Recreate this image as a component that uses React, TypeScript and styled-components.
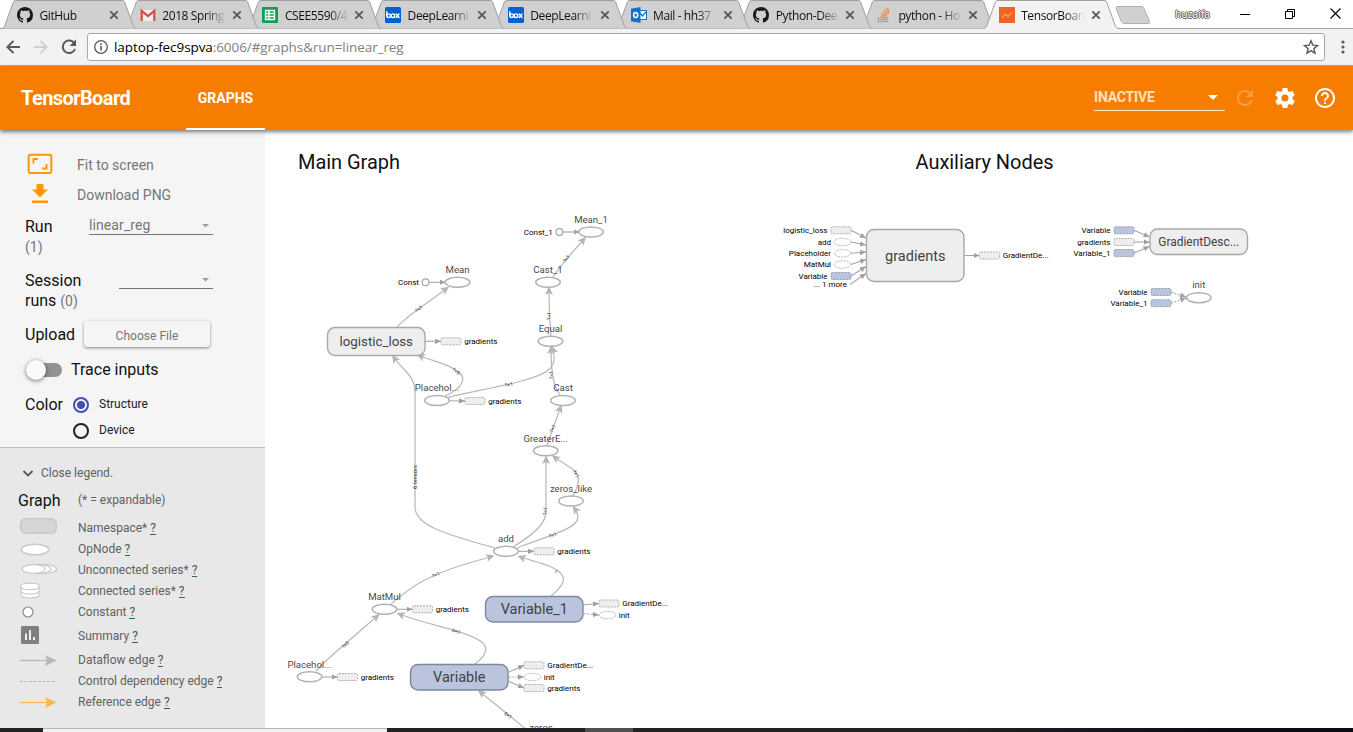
import React from "react";
import styled, { createGlobalStyle, css } from "styled-components";

const GlobalStyle = createGlobalStyle`
  * { box-sizing: border-box; }
  body { margin: 0; background: #fff; overflow: hidden; }
`;

const chromeFont = `"Open Sans", "Noto Sans", sans-serif`;

const Window = styled.div`
  width: 1353px;
  height: 732px;
  display: flex;
  flex-direction: column;
  overflow: hidden;
  font-family: Roboto, "Liberation Sans", sans-serif;
  color: #212121;
`;

/* ---------- browser chrome ---------- */

const TabStrip = styled.div`
  height: 29px;
  flex: none;
  display: flex;
  padding-left: 2px;
  border-bottom: 1px solid #a3a3a3;
  font-family: ${chromeFont};
`;

const TabBox = styled.div<{ $active?: boolean; $order: number }>`
  display: grid;
  width: 134px;
  height: 29px;
  flex: none;
  margin-right: -11.3px;
  position: relative;
  z-index: ${(p) => (p.$active ? 20 : p.$order)};
  > * { grid-area: 1 / 1; }
`;

const TabShape = styled.svg`
  display: block;
  overflow: visible;
`;

const TabContent = styled.div`
  display: flex;
  align-items: center;
  padding: 1px 16px 0 15px;
`;

const TabTitle = styled.span`
  margin-left: 6.5px;
  width: 63px;
  font-size: 12px;
  letter-spacing: -0.4px;
  color: #111;
  white-space: nowrap;
  overflow: hidden;
  mask-image: linear-gradient(90deg, #000 44px, transparent 64px);
`;

const TabClose = styled.svg`
  display: block;
  margin-left: 6.5px;
`;

const NewTab = styled.svg`
  display: block;
  margin-left: 9px;
  margin-top: 6px;
`;

const WindowControls = styled.div`
  margin-left: auto;
  display: flex;
  align-items: center;
  height: 27px;
  padding-right: 12px;
`;

const UserName = styled.span`
  font-size: 10px;
  color: #fff;
  letter-spacing: 0.1px;
  margin-right: 30px;
  text-shadow: 1px 0 #555, -1px 0 #666, 0 1px #555, 0 -1px #666;
`;

const ControlIcon = styled.svg<{ $gap?: number }>`
  display: block;
  margin-right: ${(p) => p.$gap ?? 0}px;
`;

const AddressRow = styled.div`
  height: 37px;
  flex: none;
  display: flex;
  align-items: center;
  background: #f2f2f2;
  border-bottom: 1px solid #b3b0ab;
  padding: 0 6px 0 5px;
`;

const NavIcon = styled.svg<{ $gap?: number }>`
  display: block;
  flex: none;
  margin-right: ${(p) => p.$gap ?? 10}px;
`;

const AddressBar = styled.div`
  height: 28px;
  width: 1238px;
  display: flex;
  align-items: center;
  border: 1px solid #a8a8a8;
  border-radius: 3px;
  background: #fff;
  padding: 0 5px;
  font-family: ${chromeFont};
  font-size: 13.5px;
  color: #000;
`;

const Url = styled.span`
  margin-left: 5px;
  margin-right: auto;
  letter-spacing: -0.08px;
  white-space: nowrap;
  span { color: #808080; }
`;

const MenuDots = styled.svg`
  display: block;
  margin-left: 16px;
`;

/* ---------- application header ---------- */

const AppHeader = styled.header`
  height: 64px;
  flex: none;
  display: flex;
  align-items: center;
  background: #f77d00;
  padding: 0 16px 0 21px;
  position: relative;
  z-index: 2;
  box-shadow: 0 2px 4px rgba(0, 0, 0, 0.5);
  color: #fff;
`;

const Brand = styled.h1`
  margin: 0;
  width: 165px;
  font-size: 20px;
  font-weight: 700;
  letter-spacing: -0.58px;
`;

const HeaderTab = styled.div`
  width: 79px;
  height: 64px;
  border-bottom: 2px solid #fff;
  display: flex;
  align-items: center;
  justify-content: center;
  padding-top: 2px;
  font-size: 14px;
  font-weight: 700;
  letter-spacing: 0;
`;

const RunSelect = styled.div`
  margin-left: auto;
  width: 131px;
  height: 26px;
  border-bottom: 1px solid #ffe9d2;
  display: flex;
  align-items: center;
  justify-content: space-between;
  padding: 0 7px 1px 0;
  font-size: 14px;
  font-weight: 700;
  letter-spacing: -0.18px;
  color: #ffe0c0;
`;

const HeaderIcon = styled.svg<{ $faded?: boolean }>`
  display: block;
  margin-left: ${(p) => (p.$faded ? 8 : 16)}px;
  fill: #fff;
  opacity: ${(p) => (p.$faded ? 0.25 : 1)};
`;

/* ---------- body ---------- */

const Body = styled.main`
  height: 598px;
  flex: none;
  display: flex;
`;

const Sidebar = styled.aside`
  width: 265px;
  display: flex;
  flex-direction: column;
  background: #f5f5f5;
`;

const Controls = styled.section`
  height: 317px;
  padding: 20px 0 0 25px;
`;

const ActionRow = styled.div`
  height: 30px;
  display: flex;
  align-items: center;
  font-size: 14px;
  color: #757575;
  svg { display: block; margin: -2px 22px 0 0; }
`;

const FieldRow = styled.div<{ $h: number; $top?: number }>`
  height: ${(p) => p.$h}px;
  margin-top: ${(p) => p.$top ?? 0}px;
  display: flex;
  font-size: 16px;
  line-height: 19.5px;
  color: #111;
`;

const FieldLabel = styled.div<{ $w: number; $drop?: number }>`
  width: ${(p) => p.$w}px;
  padding-top: ${(p) => p.$drop ?? 0}px;
  flex: none;
  small { font-size: 14px; line-height: 18px; color: #757575; }
`;

const Dropdown = styled.div<{ $w: number }>`
  width: ${(p) => p.$w}px;
  height: 18px;
  border-bottom: 1px solid #757575;
  display: flex;
  align-items: center;
  justify-content: space-between;
  padding: 1px 4px 0 0;
  font-size: 14px;
  letter-spacing: 0.1px;
  color: #757575;
`;

const FileButton = styled.button`
  width: 126px;
  height: 26px;
  margin: -1px 0 0 1px;
  border: 0;
  border-radius: 3px;
  background: #f5f5f5;
  box-shadow: 0 1px 3px rgba(0, 0, 0, 0.45);
  font: 12px Roboto, sans-serif;
  letter-spacing: 0.03px;
  color: #757575;
  padding: 3px 0 0;
`;

const Toggle = styled.div`
  width: 36px;
  height: 20px;
  display: flex;
  align-items: center;
  margin: 0 9px 0 1px;
  &::before {
    content: "";
    width: 20px;
    height: 20px;
    border-radius: 50%;
    background: #fafafa;
    box-shadow: 0 1px 4px rgba(0, 0, 0, 0.55);
    z-index: 1;
  }
  &::after {
    content: "";
    width: 26px;
    height: 14px;
    border-radius: 7px;
    background: #929292;
    margin-left: -10px;
  }
`;

const Radio = styled.span<{ $on?: boolean }>`
  width: 16px;
  height: 16px;
  border-radius: 50%;
  border: 2px solid #212121;
  margin-right: 10px;
  ${(p) =>
    p.$on &&
    css`
      border-color: #3f51b5;
      background: radial-gradient(circle, #3f51b5 3.6px, transparent 4.4px);
    `}
`;

const RadioGroup = styled.div`
  display: flex;
  flex-direction: column;
`;

const RadioRow = styled.label`
  height: 26px;
  display: flex;
  align-items: center;
  font-size: 12px;
  color: #212121;
`;

const Legend = styled.section`
  flex: 1;
  background: #e8e8e8;
  border-top: 1px solid #bdbdbd;
  padding-top: 15px;
  font-size: 12px;
  color: #616161;
`;

const LegendToggle = styled.div`
  height: 20px;
  display: flex;
  align-items: center;
  padding-left: 22px;
  svg { display: block; margin-right: 7px; }
`;

const LegendHeading = styled.div`
  height: 34px;
  display: grid;
  grid-template-columns: 60px auto;
  align-items: center;
  padding-left: 18px;
  b { font-weight: 400; font-size: 16px; color: #111; }
`;

const LegendRow = styled.div<{ $h?: number }>`
  height: ${(p) => p.$h ?? 21}px;
  display: grid;
  grid-template-columns: 60px auto;
  align-items: center;
  padding-left: 18px;
  svg { display: block; overflow: visible; }
  a { color: #4c5a4f; border-bottom: 1px solid #2e6b3c; line-height: 12px; display: inline-block; }
`;

const GraphPane = styled.section`
  flex: 1;
  display: grid;
  background: #fff;
  > * { grid-area: 1 / 1; }
`;

const GraphTitles = styled.div`
  display: flex;
  padding: 20px 0 0 33px;
  font-size: 20px;
  line-height: 24px;
  letter-spacing: -0.04px;
  color: #111;
  span:first-child { width: 617.5px; }
`;

const GraphSvg = styled.svg`
  display: block;
  overflow: hidden;
  font-family: Roboto, sans-serif;
`;

const Taskbar = styled.footer`
  height: 4px;
  flex: none;
  display: flex;
  background: linear-gradient(90deg, #222326 0 70%, #0a0d14 90%);
`;

const TaskSegment = styled.div<{ $w: number; $tone?: "light" | "mid" }>`
  width: ${(p) => p.$w}px;
  background: ${(p) => (p.$tone === "light" ? "#f2f1f1" : p.$tone === "mid" ? "#505052" : "transparent")};
  border-top: ${(p) => (p.$tone === "light" ? "1px solid #b5b5b5" : "0")};
`;

/* ---------- favicons ---------- */

const GithubIcon = () => (
  <svg width="16" height="16" viewBox="0 0 16 16">
    <path
      fill="#1b1817"
      d="M8 0C3.58 0 0 3.58 0 8c0 3.54 2.29 6.53 5.47 7.59.4.07.55-.17.55-.38 0-.19-.01-.82-.01-1.49-2.01.37-2.53-.49-2.69-.94-.09-.23-.48-.94-.82-1.13-.28-.15-.68-.52-.01-.53.63-.01 1.08.58 1.23.82.72 1.21 1.87.87 2.33.66.07-.52.28-.87.51-1.07-1.78-.2-3.64-.89-3.64-3.95 0-.87.31-1.59.82-2.15-.08-.2-.36-1.02.08-2.12 0 0 .67-.21 2.2.82.64-.18 1.32-.27 2-.27s1.36.09 2 .27c1.53-1.04 2.2-.82 2.2-.82.44 1.1.16 1.92.08 2.12.51.56.82 1.27.82 2.15 0 3.07-1.87 3.75-3.65 3.95.29.25.54.73.54 1.48 0 1.07-.01 1.93-.01 2.2 0 .21.15.46.55.38A8.01 8.01 0 0 0 16 8c0-4.42-3.58-8-8-8z"
    />
  </svg>
);

const GmailIcon = () => (
  <svg width="16" height="16" viewBox="0 0 16 16">
    <rect x="1" y="3" width="14" height="11" fill="#f3eeee" />
    <path d="M1.700 14V3.800L8 9l6.300-5.200V14" fill="none" stroke="#d54b3d" strokeWidth="2.200" />
  </svg>
);

const SheetsIcon = () => (
  <svg width="16" height="16" viewBox="0 0 16 16">
    <rect width="16" height="16" rx="1" fill="#109d58" />
    <path d="M3.500 3.500h9v9h-9zM3.500 6.500h9M3.500 9.500h9M7 3.500v9" fill="none" stroke="#fff" strokeWidth="1.300" />
  </svg>
);

const BoxIcon = () => (
  <svg width="16" height="16" viewBox="0 0 16 16">
    <rect width="16" height="16" rx="1.500" fill="#0061d5" />
    <g fill="none" stroke="#fff" strokeWidth="1.400" strokeLinecap="round">
      <path d="M1.800 4.800v4" />
      <circle cx="3.700" cy="8.700" r="1.800" />
      <circle cx="8" cy="8.700" r="1.800" />
      <path d="M11.200 7l2.800 3.500M14 7l-2.800 3.500" />
    </g>
  </svg>
);

const OutlookIcon = () => (
  <svg width="16" height="16" viewBox="0 0 16 16">
    <rect x="8" y="3.500" width="7.500" height="9" fill="#fff" stroke="#0f72c6" />
    <path d="M9 6l2.500 3L15.500 4.500" fill="none" stroke="#0f72c6" strokeWidth="1.200" />
    <path d="M0 1.800L9.500 0v16L0 14.200z" fill="#0f72c6" />
    <ellipse cx="4.700" cy="8" rx="2" ry="2.600" fill="none" stroke="#fff" strokeWidth="1.500" />
  </svg>
);

const StackIcon = () => (
  <svg width="16" height="16" viewBox="0 0 16 16">
    <path d="M2.500 10v4.500h9V10" fill="none" stroke="#a5a5a8" strokeWidth="1.300" />
    <path d="M4.200 12.300h5.800M4.300 9.900l5.800.7M4.900 7.200l5.500 1.900M6.300 4.500l4.800 3.300M8.600 2l3.600 4.500M11.300.5l1.500 5" stroke="#f08030" strokeWidth="1.200" fill="none" />
  </svg>
);

const TensorIcon = () => (
  <svg width="16" height="16" viewBox="0 0 16 16">
    <rect width="16" height="16" fill="#f1622a" />
    <path d="M2.800 11l3.400-3.800 3 2.300L13 5" fill="none" stroke="#fba81c" strokeWidth="1.500" />
  </svg>
);

const tabs = [
  { title: "GitHub", icon: <GithubIcon /> },
  { title: "2018 Spring", icon: <GmailIcon /> },
  { title: "CSEE5590/4", icon: <SheetsIcon /> },
  { title: "DeepLearni", icon: <BoxIcon /> },
  { title: "DeepLearni", icon: <BoxIcon /> },
  { title: "Mail - hh37", icon: <OutlookIcon /> },
  { title: "Python-Dee", icon: <GithubIcon /> },
  { title: "python - Ho", icon: <StackIcon /> },
  { title: "TensorBoard", icon: <TensorIcon />, active: true },
];

const Tab = ({ title, icon, active, order }: { title: string; icon: React.ReactNode; active?: boolean; order: number }) => (
  <TabBox $active={active} $order={order}>
    <TabShape width="134" height="29">
      <path
        d="M0 28.500C2 28 2.500 26.500 3 25L11 3C11.700 1.200 12.300.5 14 .5H120C121.700.5 122.300 1.200 123 3L131 25C131.500 26.500 132 28 134 28.500"
        fill={active ? "#f2f2f2" : "#d0d0d0"}
        stroke="#a0a0a0"
      />
      {active && <path d="M1 28.500H133" stroke="#f2f2f2" strokeWidth="1.200" />}
    </TabShape>
    <TabContent>
      {icon}
      <TabTitle>{title}</TabTitle>
      <TabClose width="10" height="10" viewBox="0 0 10 10">
        <path d="M1.300 1.300l7.400 7.400M8.700 1.300L1.300 8.700" stroke="#555" strokeWidth="1.700" />
      </TabClose>
    </TabContent>
  </TabBox>
);

/* ---------- graph drawing ---------- */

const OpNode = ({ x, y, label }: { x: number; y: number; label: string }) => (
  <g>
    <ellipse cx={x} cy={y} rx="12.300" ry="5" fill="#fff" stroke="#b0b0b0" strokeWidth="1.400" />
    <text x={x} y={y - 9.3} textAnchor="middle" fontSize="9.600" fill="#4a4a4a">{label}</text>
  </g>
);

const Namespace = ({ x, y, w = 97.5, h, label, blue, size = 14.5 }: { x: number; y: number; w?: number; h: number; label: string; blue?: boolean; size?: number }) => (
  <g>
    <rect x={x} y={y} width={w} height={h} rx="7.500" fill={blue ? "#bac5dd" : "#eeeeee"} stroke={blue ? "#7e88a0" : "#a9a9a9"} strokeWidth="1.400" />
    <text x={x + w / 2} y={y + h / 2 + size * 0.36} textAnchor="middle" fontSize={size} fill="#424242">{label}</text>
  </g>
);

type NoteKind = "ns" | "blue" | "op";

const NoteShape = ({ x, y, kind }: { x: number; y: number; kind: NoteKind }) =>
  kind === "op" ? (
    <ellipse cx={x} cy={y} rx="8.300" ry="3.700" fill="#fff" stroke="#adadad" strokeWidth=".9" strokeDasharray="2 1" />
  ) : (
    <rect x={x - 10} y={y - 3.5} width="20" height="7" rx="1.500" fill={kind === "blue" ? "#bac5dd" : "#eeeeee"} stroke={kind === "blue" ? "#8d97af" : "#a9a9a9"} strokeWidth=".9" strokeDasharray="2 1" />
  );

const NoteText = ({ x, y, end, children }: { x: number; y: number; end?: boolean; children: string }) => (
  <text x={x} y={y + 2.8} textAnchor={end ? "end" : "start"} fontSize="8" fill="#000">{children}</text>
);

const NoteArrow = ({ d, dotted }: { d: string; dotted?: boolean }) => (
  <path d={d} fill="none" stroke="#a6a6a6" strokeWidth="1.100" strokeDasharray={dotted ? "2 1.500" : undefined} markerEnd="url(#noteHead)" />
);

/* Outgoing annotation: arrow from the node edge, then shape and label. */
const OutNote = ({ from, x, y, kind = "ns", label }: { from: [number, number]; x: number; y: number; kind?: NoteKind; label: string }) => (
  <g>
    <NoteArrow d={`M${from[0]} ${from[1]}L${x} ${y}`} dotted={kind === "op"} />
    <NoteShape x={kind === "op" ? x + 8.5 : x + 10} y={y} kind={kind} />
    <NoteText x={kind === "op" ? x + 19.7 : x + 23.2} y={y}>{label}</NoteText>
  </g>
);

/* Incoming annotation: label, shape, then arrow towards the node edge. */
const InNote = ({ to, x, y, kind, label, dotted }: { to: [number, number]; x: number; y: number; kind: NoteKind; label: string; dotted?: boolean }) => (
  <g>
    <NoteArrow d={`M${x} ${y}L${to[0]} ${to[1]}`} dotted={dotted} />
    <NoteShape x={kind === "op" ? x - 8.5 : x - 10} y={y} kind={kind} />
    <NoteText x={kind === "op" ? x - 20 : x - 23.5} y={y} end>{label}</NoteText>
  </g>
);

const ConstNote = ({ x, y, label }: { x: number; y: number; label: string }) => (
  <g>
    <NoteArrow d={`M${x + 3} ${y}H${x + 20}`} />
    <circle cx={x} cy={y} r="3.400" fill="#fff" stroke="#a6a6a6" strokeWidth="1.200" />
    <NoteText x={x - 6.7} y={y} end>{label}</NoteText>
  </g>
);

const edges = [
  "M553 277C560 267 562 265 566.500 259L585 238",
  "M551 336C550 325 549 315 549 288",
  "M397 327C405 319 405 320 409 316L448 287.500",
  "M445 396C463 388 467 378 458 371.500C449 364 432 361 418 355",
  "M446 398C480 389 535 382 549 369.500C556 363 555 355 552 347",
  "M560 395C553 385 551 372 551 347",
  "M547 446C551 433 556 420 561 406",
  "M495 548C440 533 415 524 415 507V392C415 375 402 370 393 356",
  "M513 547C541 530 546 520 546 511V457",
  "M517 548C545 537 569 531 576 522C580 517 577 512 573.500 507",
  "M573 496C578 487 581 477 575 471.500C570 466 562 463 553 456",
  "M390 605C405 592 418 583 427 579C450 567 470 563 493 556",
  "M551 596C564 585 566 579 561 573.500C553 565 535 562 519 556.500",
  "M316 671C330 656 333 655 345 644L378.500 615",
  "M475 664C487 655 489 647 481 641.500C465 630 430 626 398 613.500",
  "M532 734L479 691",
];

const edgeLabels: [number, number, number, string][] = [
  [566.5, 259, -52, "?×1"],
  [549.5, 316, -90, "?×1"],
  [419, 309, -38, "?×1"],
  [456, 371.5, 30, "?×6"],
  [509, 385, -12, "?×1"],
  [551.5, 375, -95, "?×1"],
  [553, 428.5, -68, "?×1"],
  [415, 477, -90, "6 tensors"],
  [545.5, 511, -85, "?×1"],
  [553, 535.5, -20, "?×1"],
  [575.5, 474, 60, "?×1"],
  [436, 575, -22, "?×1"],
  [555.5, 572, 35, "1"],
  [345.5, 645, -42, "?×6"],
  [456, 631.5, 20, "6×1"],
  [508, 715.5, 40, "6×1"],
];

const Graph = () => (
  <GraphSvg width="1088" height="598" viewBox="265 130 1088 598">
    <defs>
      <marker id="edgeHead" markerUnits="userSpaceOnUse" markerWidth="9" markerHeight="9" refX="7" refY="4" orient="auto">
        <path d="M0 0L8.500 4L0 8L2 4Z" fill="#b5b5b5" />
      </marker>
      <marker id="noteHead" markerUnits="userSpaceOnUse" markerWidth="7" markerHeight="7" refX="6" refY="2.700" orient="auto">
        <path d="M0 0L6 2.700L0 5.400Z" fill="#a0a0a0" />
      </marker>
    </defs>
    {edges.map((d) => (
      <path key={d} d={d} fill="none" stroke="#b9b9b9" strokeWidth="1.250" markerEnd="url(#edgeHead)" />
    ))}

    <OutNote from={[425, 341.3]} x={441} y={341.3} label="gradients" />
    <OutNote from={[449, 400.7]} x={465} y={401} label="gradients" />
    <OutNote from={[518, 551.3]} x={534} y={551.3} label="gradients" />
    <OutNote from={[397, 609.3]} x={412.5} y={609.3} label="gradients" />
    <OutNote from={[322, 677]} x={337.5} y={677} label="gradients" />
    <OutNote from={[584, 604.8]} x={599} y={603.5} label="GradientDe..." />
    <OutNote from={[584, 613.5]} x={599} y={615} kind="op" label="init" />
    <OutNote from={[509, 672]} x={524} y={665.3} label="GradientDe..." />
    <OutNote from={[509, 677]} x={524} y={677} kind="op" label="init" />
    <OutNote from={[509, 681.5]} x={524} y={688} label="gradients" />
    <ConstNote x={559.5} y={232} label="Const_1" />
    <ConstNote x={425.6} y={282.3} label="Const" />

    <OpNode x={591} y={232} label="Mean_1" />
    <OpNode x={548} y={282.3} label="Cast_1" />
    <OpNode x={457.5} y={282.3} label="Mean" />
    <OpNode x={550.5} y={341.3} label="Equal" />
    <OpNode x={437} y={400.5} label="Placehol..." />
    <OpNode x={563} y={400.5} label="Cast" />
    <OpNode x={545.7} y={450.8} label="GreaterE..." />
    <OpNode x={571} y={501} label="zeros_like" />
    <OpNode x={506} y={551.3} label="add" />
    <OpNode x={384.5} y={609.3} label="MatMul" />
    <OpNode x={309.6} y={676.8} label="Placehol..." />
    <OpNode x={541} y={740} label="zeros" />
    <Namespace x={327.5} y={327.5} h={28} label="logistic_loss" size={13.3} />
    <Namespace x={485.5} y={596.5} h={25.5} label="Variable_1" blue />
    <Namespace x={410.5} y={664.5} h={25.5} label="Variable" blue />

    {edgeLabels.map(([x, y, r, t]) => (
      <text key={`${x}-${y}`} transform={`translate(${x} ${y}) rotate(${r})`} y="1.500" textAnchor="middle" fontSize={t.length > 3 ? 5.8 : 5.2} fill="#333">
        {t}
      </text>
    ))}

    <InNote to={[866, 238]} x={851} y={230.3} kind="ns" label="logistic_loss" />
    <InNote to={[866, 245]} x={851} y={242} kind="op" label="add" />
    <InNote to={[866, 252]} x={851} y={253.3} kind="op" label="Placeholder" />
    <InNote to={[866, 259.5]} x={851} y={264.5} kind="op" label="MatMul" />
    <InNote to={[866, 266.5]} x={851} y={276} kind="blue" label="Variable" />
    <NoteArrow d="M850 284.500L866 273.500" />
    <NoteText x={847} y={284.3} end>... 1 more</NoteText>
    <OutNote from={[964, 255.5]} x={979.5} y={255.5} label="GradientDe..." />
    <Namespace x={866.5} y={229.5} h={52} label="gradients" />

    <InNote to={[1149.5, 237]} x={1134} y={230.3} kind="blue" label="Variable" />
    <InNote to={[1149.5, 242]} x={1134} y={242} kind="ns" label="gradients" />
    <InNote to={[1149.5, 246.5]} x={1134} y={253} kind="blue" label="Variable_1" />
    <Namespace x={1150} y={229} h={25.5} label="GradientDesc..." size={11.95} />

    <InNote to={[1186, 297]} x={1171} y={292} kind="blue" label="Variable" dotted />
    <InNote to={[1186, 298]} x={1171} y={303.2} kind="blue" label="Variable_1" dotted />
    <OpNode x={1198.8} y={297.7} label="init" />
  </GraphSvg>
);

/* ---------- legend ---------- */

const legend: { label: string; h?: number; icon: React.ReactNode }[] = [
  {
    label: "Namespace*",
    icon: <rect x="2.700" y="1.700" width="35.500" height="14.500" rx="5" fill="#d6d6d6" stroke="#c8c8c8" strokeWidth="1.500" />,
  },
  { label: "OpNode", icon: <ellipse cx="17" cy="11.500" rx="13.700" ry="5.300" fill="#fff" stroke="#c8c8c8" strokeWidth="1.400" /> },
  {
    label: "Unconnected series*",
    icon: (
      <g fill="#fff" stroke="#c8c8c8" strokeWidth="1.200">
        <ellipse cx="27" cy="10" rx="11.500" ry="4.300" />
        <ellipse cx="21.500" cy="10" rx="11.500" ry="4.300" />
        <ellipse cx="15.500" cy="10" rx="11.500" ry="4.300" />
      </g>
    ),
  },
  {
    label: "Connected series*",
    icon: (
      <g fill="#fff" stroke="#c8c8c8" strokeWidth="1.100">
        <path d="M3 5.500V15C3 17 7 18 12 18S21 17 21 15V5.500C21 4 17 3.300 12 3.300S3 4 3 5.500Z" />
        <path d="M3 6.500C3 8.800 7 9.800 12 9.800S21 8.800 21 6.500M3 10.700C3 13 7 14 12 14S21 13 21 10.700" />
      </g>
    ),
  },
  { label: "Constant", icon: <circle cx="10" cy="11" r="5" fill="#fff" stroke="#8a8a8a" strokeWidth="1.200" /> },
  {
    label: "Summary",
    h: 27,
    icon: (
      <g>
        <rect x="3" y="1" width="18" height="18" rx="1.500" fill="#808080" />
        <path d="M8 8.500v6.500M12 5v10M16 12v3" stroke="#fff" strokeWidth="1.700" />
      </g>
    ),
  },
  {
    label: "Dataflow edge",
    icon: (
      <g>
        <path d="M2 11.500H30" stroke="#b8b8b8" strokeWidth="1.300" />
        <path d="M27 6L38.500 11.500L27 17L29 11.500Z" fill="#b8b8b8" />
      </g>
    ),
  },
  { label: "Control dependency edge", icon: <path d="M2 11.500H38" stroke="#b8b8b8" strokeWidth="1.200" strokeDasharray="3 1.500" /> },
  {
    label: "Reference edge",
    icon: (
      <g>
        <path d="M2 11.500H30" stroke="#ffb74d" strokeWidth="1.300" />
        <path d="M27 6L38.500 11.500L27 17L29 11.500Z" fill="#ffb74d" />
      </g>
    ),
  },
];

const Caret = ({ color, w = 10 }: { color: string; w?: number }) => (
  <svg width={w} height={w / 2} viewBox="0 0 10 5">
    <path d="M0 0h10L5 5z" fill={color} />
  </svg>
);

export default function App() {
  return (
    <Window>
      <GlobalStyle />
      <TabStrip>
        {tabs.map((t, i) => (
          <Tab key={i} {...t} order={10 - i} />
        ))}
        <NewTab width="36" height="19">
          <path d="M3 .5H26C28 .5 28.500 1 29.300 3L34.500 15.500C35 17 34.500 17.500 33 17.500H10C8 17.500 7 17 6.300 15.500L1.300 3C.7 1.300 1 .5 3 .5Z" fill="#d0d0d0" stroke="#b0b0b0" />
        </NewTab>
        <WindowControls>
          <UserName>huzaifa</UserName>
          <ControlIcon $gap={35} width="10" height="10"><path d="M0 5.500H10" stroke="#000" /></ControlIcon>
          <ControlIcon $gap={35} width="10" height="10" viewBox="0 0 10 10">
            <path d="M.5 2.500h7v7h-7zM2.500 2.500V.5h7v7h-2" fill="none" stroke="#000" />
          </ControlIcon>
          <ControlIcon width="11" height="11" viewBox="0 0 11 11">
            <path d="M.5.5l10 10M10.500.5l-10 10" stroke="#000" strokeWidth="1.100" />
          </ControlIcon>
        </WindowControls>
      </TabStrip>
      <AddressRow>
        <NavIcon width="17" height="16" viewBox="0 0 17 16">
          <path d="M15 8H2.500M8.500 2L2.300 8l6.200 6" fill="none" stroke="#5a5a5a" strokeWidth="1.900" />
        </NavIcon>
        <NavIcon $gap={11} width="17" height="16" viewBox="0 0 17 16">
          <path d="M2 8h12.500M8.500 2l6.200 6-6.200 6" fill="none" stroke="#d0d0d0" strokeWidth="1.900" />
        </NavIcon>
        <NavIcon $gap={9} width="18" height="18" viewBox="0 0 18 18">
          <path d="M14.500 5.500A6.300 6.300 0 1 0 15 11" fill="none" stroke="#5a5a5a" strokeWidth="2" />
          <path d="M16 1.500V8H9.500z" fill="#5a5a5a" />
        </NavIcon>
        <AddressBar>
          <svg width="16" height="16" viewBox="0 0 16 16">
            <circle cx="8" cy="8" r="6.300" fill="none" stroke="#5a5a5a" strokeWidth="1.300" />
            <path d="M8 7v4.500M8 4.300v1.700" stroke="#5a5a5a" strokeWidth="1.600" />
          </svg>
          <Url>laptop-fec9spva<span>:6006/#graphs&amp;run=linear_reg</span></Url>
          <svg width="16" height="16" viewBox="0 0 16 16">
            <path d="M8 1.700l1.800 4.400 4.700.4-3.600 3.100 1.100 4.600L8 11.700l-4 2.500 1.100-4.600L1.500 6.500l4.700-.4z" fill="none" stroke="#5a5a5a" strokeWidth="1.400" />
          </svg>
        </AddressBar>
        <MenuDots width="4" height="14">
          <circle cx="2" cy="2" r="1.600" fill="#5a5a5a" />
          <circle cx="2" cy="7" r="1.600" fill="#5a5a5a" />
          <circle cx="2" cy="12" r="1.600" fill="#5a5a5a" />
        </MenuDots>
      </AddressRow>
      <AppHeader>
        <Brand>TensorBoard</Brand>
        <HeaderTab>GRAPHS</HeaderTab>
        <RunSelect>
          INACTIVE
          <Caret color="#fff" />
        </RunSelect>
        <HeaderIcon $faded width="24" height="24" viewBox="0 0 24 24">
          <path d="M17.650 6.350A7.960 7.960 0 0 0 12 4a8 8 0 1 0 7.730 10h-2.080A6 6 0 1 1 12 6c1.660 0 3.140.69 4.220 1.780L13 11h7V4z" />
        </HeaderIcon>
        <HeaderIcon width="24" height="24" viewBox="0 0 24 24">
          <path d="M19.430 12.980c.04-.32.07-.64.07-.98s-.03-.66-.07-.98l2.110-1.650c.19-.15.24-.42.12-.64l-2-3.460c-.12-.22-.39-.3-.61-.22l-2.490 1c-.52-.4-1.080-.73-1.690-.98l-.38-2.650A.488.488 0 0 0 14 2h-4c-.25 0-.46.18-.49.42l-.38 2.650c-.61.25-1.170.59-1.690.98l-2.490-1c-.23-.09-.49 0-.61.22l-2 3.460c-.13.22-.07.49.12.64l2.110 1.650c-.04.32-.07.65-.07.98s.03.66.07.98l-2.110 1.650c-.19.15-.24.42-.12.64l2 3.460c.12.22.39.3.61.22l2.490-1c.52.4 1.080.73 1.690.98l.38 2.650c.03.24.24.42.49.42h4c.25 0 .46-.18.49-.42l.38-2.650c.61-.25 1.170-.59 1.690-.98l2.490 1c.23.09.49 0 .61-.22l2-3.460c.12-.22.07-.49-.12-.64l-2.110-1.650zM12 15.500a3.500 3.500 0 1 1 0-7 3.500 3.500 0 0 1 0 7z" />
        </HeaderIcon>
        <HeaderIcon width="24" height="24" viewBox="0 0 24 24">
          <path d="M11 18h2v-2h-2v2zm1-16C6.480 2 2 6.480 2 12s4.480 10 10 10 10-4.480 10-10S17.520 2 12 2zm0 18c-4.410 0-8-3.590-8-8s3.590-8 8-8 8 3.590 8 8-3.590 8-8 8zm0-14c-2.210 0-4 1.790-4 4h2c0-1.100.9-2 2-2s2 .9 2 2c0 2-3 1.750-3 5h2c0-2.250 3-2.500 3-5 0-2.210-1.790-4-4-4z" />
        </HeaderIcon>
      </AppHeader>
      <Body>
        <Sidebar>
          <Controls>
            <ActionRow>
              <svg width="30" height="30" viewBox="0 0 30 30">
                <path d="M5 5.800h20a1.300 1.300 0 0 1 1.300 1.300v15.500a1.300 1.300 0 0 1-1.300 1.300H5a1.300 1.300 0 0 1-1.300-1.300v-15.500A1.300 1.300 0 0 1 5 5.800z" fill="none" stroke="#ff9800" strokeWidth="2" />
                <path d="M8.500 14.500v-4.500H13M21.500 15v4.500H17" fill="none" stroke="#ff9800" strokeWidth="2" />
              </svg>
              Fit to screen
            </ActionRow>
            <ActionRow>
              <svg width="30" height="30" viewBox="0 0 30 30">
                <path d="M11.500 5h7v5.500H23l-8 8-8-8h4.500zM7 21.500h16V24H7z" fill="#ff9800" />
              </svg>
              Download PNG
            </ActionRow>
            <FieldRow $h={42} $top={7}>
              <FieldLabel $w={64}>Run<br /><small>(1)</small></FieldLabel>
              <Dropdown $w={124}>linear_reg<Caret color="#9e9e9e" w={7} /></Dropdown>
            </FieldRow>
            <FieldRow $h={42} $top={12}>
              <FieldLabel $w={94}>Session<br />runs <small>(0)</small></FieldLabel>
              <Dropdown $w={94}><span /><Caret color="#9e9e9e" w={7} /></Dropdown>
            </FieldRow>
            <FieldRow $h={28} $top={9}>
              <FieldLabel $w={58} $drop={3}>Upload</FieldLabel>
              <FileButton>Choose File</FileButton>
            </FieldRow>
            <FieldRow $h={20} $top={10}>
              <Toggle />
              Trace inputs
            </FieldRow>
            <FieldRow $h={52} $top={12}>
              <FieldLabel $w={48} $drop={3}>Color</FieldLabel>
              <RadioGroup>
                <RadioRow><Radio $on />Structure</RadioRow>
                <RadioRow><Radio />Device</RadioRow>
              </RadioGroup>
            </FieldRow>
          </Controls>
          <Legend>
            <LegendToggle>
              <svg width="12" height="12" viewBox="0 0 12 12">
                <path d="M1.500 4L6 8.500L10.500 4" fill="none" stroke="#555" strokeWidth="1.800" />
              </svg>
              Close legend.
            </LegendToggle>
            <LegendHeading><b>Graph</b>(* = expandable)</LegendHeading>
            {legend.map((row) => (
              <LegendRow key={row.label} $h={row.h}>
                <svg width="42" height="21">{row.icon}</svg>
                <span>{row.label} <a>?</a></span>
              </LegendRow>
            ))}
          </Legend>
        </Sidebar>
        <GraphPane>
          <Graph />
          <GraphTitles>
            <span>Main Graph</span>
            <span>Auxiliary Nodes</span>
          </GraphTitles>
        </GraphPane>
      </Body>
      <Taskbar>
        <TaskSegment $w={43} />
        <TaskSegment $w={344} $tone="light" />
        <TaskSegment $w={198} />
        <TaskSegment $w={48} $tone="mid" />
      </Taskbar>
    </Window>
  );
}
